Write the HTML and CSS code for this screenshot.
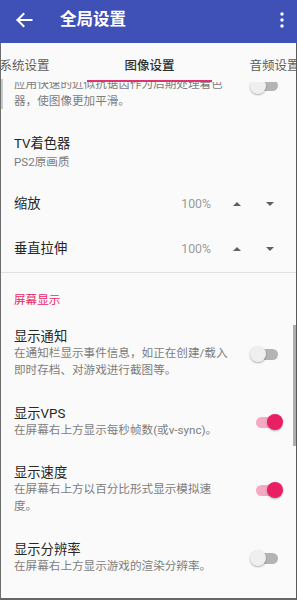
FILE: index.html
```html
<!DOCTYPE html>
<html lang="zh-CN">
<head>
<meta charset="utf-8">
<title>全局设置</title>
<link rel="stylesheet" href="styles.css">
</head>
<body>
<div class="screen">
  <header class="appbar">
    <svg class="back" width="24" height="24" viewBox="0 0 24 24" aria-hidden="true">
      <path d="M5.5 12H19.5M11.5 6L5.5 12L11.5 18" fill="none" stroke="#fff" stroke-width="2" stroke-linecap="square"/>
    </svg>
    <h1 class="title">全局设置</h1>
    <svg class="menu" width="4" height="16" viewBox="0 0 4 16" aria-hidden="true">
      <circle cx="2" cy="2" r="1.7" fill="#fff"/>
      <circle cx="2" cy="8" r="1.7" fill="#fff"/>
      <circle cx="2" cy="14" r="1.7" fill="#fff"/>
    </svg>
  </header>

  <nav class="tabs">
    <div class="tabs-track">
      <div class="tab">系统设置</div>
      <div class="tab active">图像设置</div>
      <div class="tab">音频设置</div>
    </div>
  </nav>

  <main class="content">
    <div class="item item-clipped">
      <div class="texts">
        <p class="desc">应用快速的近似抗锯齿作为后期处理着色器，使图像更加平滑。</p>
      </div>
      <span class="switch switch-top"><span class="track"></span><span class="thumb"></span></span>
    </div>

    <div class="item item-tv">
      <div class="texts">
        <p class="label">TV着色器</p>
        <p class="desc desc-tv">PS2原画质</p>
      </div>
    </div>

    <div class="stepper-row">
      <span class="label grow">缩放</span>
      <span class="value">100%</span>
      <span class="btn"><i class="tri-up"></i></span>
      <span class="btn"><i class="tri-down"></i></span>
    </div>

    <div class="stepper-row">
      <span class="label grow">垂直拉伸</span>
      <span class="value">100%</span>
      <span class="btn"><i class="tri-up"></i></span>
      <span class="btn"><i class="tri-down"></i></span>
    </div>

    <div class="divider"></div>

    <div class="section">屏幕显示</div>

    <div class="item">
      <div class="texts">
        <p class="label">显示通知</p>
        <p class="desc">在通知栏显示事件信息，如正在创建/载入即时存档、对游戏进行截图等。</p>
      </div>
      <span class="switch"><span class="track"></span><span class="thumb"></span></span>
    </div>

    <div class="item">
      <div class="texts">
        <p class="label">显示VPS</p>
        <p class="desc">在屏幕右上方显示每秒帧数(或v-sync)。</p>
      </div>
      <span class="switch on"><span class="track"></span><span class="thumb"></span></span>
    </div>

    <div class="item">
      <div class="texts">
        <p class="label">显示速度</p>
        <p class="desc">在屏幕右上方以百分比形式显示模拟速度。</p>
      </div>
      <span class="switch on"><span class="track"></span><span class="thumb"></span></span>
    </div>

    <div class="item">
      <div class="texts">
        <p class="label">显示分辨率</p>
        <p class="desc">在屏幕右上方显示游戏的渲染分辨率。</p>
      </div>
      <span class="switch"><span class="track"></span><span class="thumb"></span></span>
    </div>
  </main>

  <div class="scrollbar"></div>
  <div class="edge-glow"></div>
</div>
</body>
</html>
```

FILE: styles.css
```css
* {
  box-sizing: border-box;
}

html, body {
  margin: 0;
  padding: 0;
  background: #fafafa;
}

body {
  font-family: Roboto, "Noto Sans CJK SC", sans-serif;
  color: #262626;
}

p, h1 {
  margin: 0;
}

.screen {
  position: relative;
  width: 297px;
  height: 600px;
  display: flex;
  flex-direction: column;
  background: #fafafa;
  overflow: hidden;
}

.screen::after {
  content: "";
  position: absolute;
  left: 0;
  right: 0;
  top: 43px;
  bottom: 0;
  border-left: 1px solid #6e6e6e;
  border-right: 1px solid #5a5a5a;
  border-bottom: 2px solid #666;
  pointer-events: none;
}

/* App bar */
.appbar {
  flex: 0 0 43px;
  height: 43px;
  background: #3f50b6;
  display: flex;
  align-items: center;
  padding: 0 0 3px 12px;
}

.back {
  flex: 0 0 auto;
  display: block;
}

.title {
  margin-left: 24px;
  font-size: 16.5px;
  font-weight: 700;
  line-height: 20px;
  color: #fff;
}

.menu {
  display: block;
  margin-left: auto;
  margin-right: 13.5px;
}

/* Tabs */
.tabs {
  flex: 0 0 39px;
  height: 39px;
  overflow: hidden;
}

.tabs-track {
  display: flex;
  margin-left: -38px;
  width: 375px;
}

.tab {
  flex: 0 0 125px;
  height: 39px;
  padding-top: 5px;
  display: flex;
  align-items: center;
  justify-content: center;
  font-size: 12.5px;
  color: #5c5c5c;
  border-bottom: 2px solid transparent;
}

.tab.active {
  color: #303030;
  font-weight: 500;
  border-bottom-color: #e3306f;
}

/* Content */
.content {
  flex: 1 1 auto;
  min-height: 0;
  overflow: hidden;
}

.item {
  display: flex;
  align-items: center;
  padding: 13px 13px 13.5px 14px;
}

.item-clipped {
  margin-top: -6px;
  padding-top: 0;
  padding-bottom: 13.5px;
}

.item-tv {
  padding-top: 12.5px;
  padding-bottom: 11px;
}

.texts {
  flex: 0 0 217px;
}

.label {
  font-size: 13.3px;
  line-height: 16px;
  color: #262626;
}

.desc {
  font-size: 11.6px;
  line-height: 17px;
  color: #7d7d7d;
}

.desc-tv {
  margin-top: 1.5px;
}

.stepper-row {
  display: flex;
  align-items: center;
  height: 45px;
  padding: 0 10.5px 0 14px;
}

.grow {
  flex: 1 1 auto;
}

.value {
  font-size: 12.3px;
  color: #9a9a9a;
  margin-right: 9.5px;
}

.btn {
  flex: 0 0 33px;
  height: 24px;
  display: flex;
  align-items: center;
  justify-content: center;
}

.tri-up {
  width: 0;
  height: 0;
  border-left: 4px solid transparent;
  border-right: 4px solid transparent;
  border-bottom: 4.5px solid #606060;
}

.tri-down {
  width: 0;
  height: 0;
  border-left: 4px solid transparent;
  border-right: 4px solid transparent;
  border-top: 4.5px solid #606060;
}

.divider {
  height: 1px;
  background: #e2e2e2;
}

.section {
  padding: 19.5px 14px 8px;
  font-size: 11.6px;
  line-height: 16px;
  color: #e91e63;
}

/* Switch */
.switch {
  position: relative;
  flex: 0 0 34px;
  width: 34px;
  height: 17px;
  margin-left: auto;
}

.switch-top {
  align-self: flex-start;
  margin-top: 1px;
}

.switch .track {
  position: absolute;
  left: 1px;
  top: 3px;
  width: 27px;
  height: 11px;
  border-radius: 6px;
  background: #b4b4b4;
}

.switch .thumb {
  position: absolute;
  left: 0;
  top: 0.5px;
  width: 16px;
  height: 16px;
  border-radius: 50%;
  background: #efefef;
  box-shadow: 0 1px 2px rgba(0, 0, 0, 0.3);
}

.switch.on .track {
  left: 6px;
  width: 26px;
  background: #f5a9c4;
}

.switch.on .thumb {
  left: 17px;
  background: #e91e63;
}

/* Overlays */
.scrollbar {
  position: absolute;
  left: 293px;
  top: 325px;
  width: 2.5px;
  height: 121px;
  background: rgba(0, 0, 0, 0.3);
}

.edge-glow {
  position: absolute;
  left: 0;
  top: 79px;
  width: 3px;
  height: 30px;
  background: #c9c9c9;
}
```
